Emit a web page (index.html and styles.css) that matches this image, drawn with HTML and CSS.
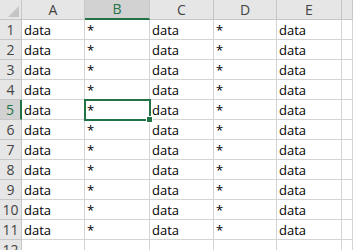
FILE: index.html
```html
<!DOCTYPE html>
<html lang="en">
<head>
    <meta charset="UTF-8">
    <title>sheet</title>
    <link rel="stylesheet" href="styles.css">
</head>
<body>
    <div class="sheet">
        <div class="corner"><span class="tri"></span></div>
        <div class="colhead">A</div>
        <div class="colhead active">B</div>
        <div class="colhead">C</div>
        <div class="colhead">D</div>
        <div class="colhead">E</div>
        <div class="colhead"></div>

        <div class="rowhead">1</div><div class="cell">data</div><div class="cell">*</div><div class="cell">data</div><div class="cell">*</div><div class="cell">data</div><div class="cell"></div>
        <div class="rowhead">2</div><div class="cell">data</div><div class="cell">*</div><div class="cell">data</div><div class="cell">*</div><div class="cell">data</div><div class="cell"></div>
        <div class="rowhead">3</div><div class="cell">data</div><div class="cell">*</div><div class="cell">data</div><div class="cell">*</div><div class="cell">data</div><div class="cell"></div>
        <div class="rowhead">4</div><div class="cell">data</div><div class="cell">*</div><div class="cell">data</div><div class="cell">*</div><div class="cell">data</div><div class="cell"></div>
        <div class="rowhead active">5</div><div class="cell">data</div><div class="cell selected">*<span class="handle"></span></div><div class="cell">data</div><div class="cell">*</div><div class="cell">data</div><div class="cell"></div>
        <div class="rowhead">6</div><div class="cell">data</div><div class="cell">*</div><div class="cell">data</div><div class="cell">*</div><div class="cell">data</div><div class="cell"></div>
        <div class="rowhead">7</div><div class="cell">data</div><div class="cell">*</div><div class="cell">data</div><div class="cell">*</div><div class="cell">data</div><div class="cell"></div>
        <div class="rowhead">8</div><div class="cell">data</div><div class="cell">*</div><div class="cell">data</div><div class="cell">*</div><div class="cell">data</div><div class="cell"></div>
        <div class="rowhead">9</div><div class="cell">data</div><div class="cell">*</div><div class="cell">data</div><div class="cell">*</div><div class="cell">data</div><div class="cell"></div>
        <div class="rowhead">10</div><div class="cell">data</div><div class="cell">*</div><div class="cell">data</div><div class="cell">*</div><div class="cell">data</div><div class="cell"></div>
        <div class="rowhead">11</div><div class="cell">data</div><div class="cell">*</div><div class="cell">data</div><div class="cell">*</div><div class="cell">data</div><div class="cell"></div>
        <div class="rowhead">12</div><div class="cell"></div><div class="cell"></div><div class="cell"></div><div class="cell"></div><div class="cell"></div><div class="cell"></div>
    </div>
</body>
</html>
```
FILE: styles.css
```css
body{
    margin: 0;
    background: #ffffff;
    font-family: "Open Sans", "Liberation Sans", sans-serif;
    overflow: hidden;
}
.sheet{
    display: grid;
    grid-template-columns: 22px 63px 65px 64px 63px 65px 1fr;
    grid-auto-rows: 20px;
    width: 353px;
}
.sheet > div{
    box-sizing: border-box;
    border-right: 1px solid #d4d4d4;
    border-bottom: 1px solid #d4d4d4;
}
.corner{
    background: #e6e6e6;
    position: relative;
    border-color: #c6c6c6 !important;
}
.tri{
    position: absolute;
    right: 2px;
    bottom: 2px;
    width: 0;
    height: 0;
    border-left: 11px solid transparent;
    border-bottom: 11px solid #c4c4c4;
}
.colhead{
    background: #e6e6e6;
    color: #444;
    font-size: 14px;
    text-align: center;
    line-height: 19px;
    border-color: #c6c6c6 !important;
}
.colhead.active{
    background: #d2d2d2;
    color: #217346;
    border-bottom: 2px solid #217346 !important;
    line-height: 18px;
}
.rowhead{
    background: #e6e6e6;
    color: #444;
    font-size: 14px;
    text-align: center;
    line-height: 20px;
    border-color: #c6c6c6 !important;
}
.rowhead.active{
    background: #d2d2d2;
    color: #217346;
    border-right: 2px solid #217346 !important;
}
.cell{
    font-size: 13px;
    color: #000;
    padding-left: 2px;
    line-height: 20px;
    position: relative;
}
.selected{
    outline: 2px solid #217346;
    outline-offset: -1px;
    z-index: 1;
}
.handle{
    position: absolute;
    right: -4px;
    bottom: -4px;
    width: 5px;
    height: 5px;
    background: #217346;
    border: 1px solid #fff;
}
```
